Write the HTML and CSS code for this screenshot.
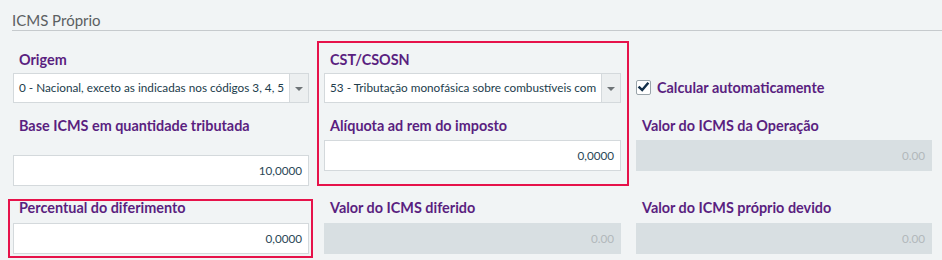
FILE: index.html
```html
<!DOCTYPE html>
<html lang="pt-BR">
<head>
<meta charset="utf-8">
<title>ICMS Próprio</title>
<link rel="stylesheet" href="styles.css">
</head>
<body>
<section class="panel">
  <h2 class="panel-title">ICMS Próprio</h2>
  <div class="grid">
    <div class="field row1 col1">
      <label class="label">Origem</label>
      <div class="select">
        <span class="select-text">0 - Nacional, exceto as indicadas nos códigos 3, 4, 5 e 8</span>
        <span class="select-btn"><span class="caret"></span></span>
      </div>
    </div>
    <div class="field row1 col2">
      <label class="label">CST/CSOSN</label>
      <div class="select">
        <span class="select-text">53 - Tributação monofásica sobre combustíveis com recolhimento diferido</span>
        <span class="select-btn"><span class="caret"></span></span>
      </div>
    </div>
    <div class="field row1 col3">
      <div class="label-spacer"></div>
      <div class="check-row">
        <span class="checkbox">
          <svg viewBox="0 0 14 14" width="14" height="14"><path d="M2.6 7.4 L5.6 10.3 L11.4 3.4" fill="none" stroke="#14304a" stroke-width="2.6" stroke-linecap="square"/></svg>
        </span>
        <span class="check-label">Calcular automaticamente</span>
      </div>
    </div>

    <div class="field row2 col1">
      <label class="label">Base ICMS em quantidade tributada</label>
      <div class="input input-low">10,0000</div>
    </div>
    <div class="field row2 col2">
      <label class="label">Alíquota ad rem do imposto</label>
      <div class="input">0,0000</div>
    </div>
    <div class="field row2 col3">
      <label class="label">Valor do ICMS da Operação</label>
      <div class="input disabled">0.00</div>
    </div>

    <div class="field row3 col1">
      <label class="label">Percentual do diferimento</label>
      <div class="input">0,0000</div>
    </div>
    <div class="field row3 col2">
      <label class="label">Valor do ICMS diferido</label>
      <div class="input disabled">0.00</div>
    </div>
    <div class="field row3 col3">
      <label class="label">Valor do ICMS próprio devido</label>
      <div class="input disabled">0.00</div>
    </div>

    <div class="highlight highlight-cst"></div>
    <div class="highlight highlight-perc"></div>
  </div>
</section>
</body>
</html>
```
FILE: styles.css
```css
* { box-sizing: border-box; }
html, body {
  margin: 0;
  padding: 0;
  background: #f1f4f5;
  font-family: Lato, "Open Sans", "Liberation Sans", sans-serif;
}
.panel {
  width: 942px;
  height: 260px;
  overflow: hidden;
  padding: 10px 0 0 12px;
}
.panel-title {
  margin: 0;
  font-size: 15px;
  font-weight: 400;
  line-height: 20px;
  color: #5b5f62;
  border-bottom: 1px solid #c6cacd;
  padding-left: 0;
}
.grid {
  display: grid;
  grid-template-columns: 296px 297px 296px;
  column-gap: 15px;
  padding: 19px 0 0 1px;
  row-gap: 12px;
}
.row1 { grid-row: 1; }
.row2 { grid-row: 2; }
.row3 { grid-row: 3; }
.col1 { grid-column: 1; }
.col2 { grid-column: 2; }
.col3 { grid-column: 3; }
.field { display: flex; flex-direction: column; min-width: 0; }
.label {
  display: block;
  font-size: 14.4px;
  font-weight: 700;
  line-height: 20px;
  color: #5a1f80;
  padding-left: 6px;
  white-space: nowrap;
}
.row1 .label, .label-spacer { margin-bottom: 3px; }
.label-spacer { height: 20px; }
.row2 .label { margin-bottom: 4px; }
.row3 .label { margin-bottom: 5px; }
.row1 { margin-bottom: 1px; }

.select {
  height: 30px;
  background: #fff;
  border: 1px solid #d4d9dc;
  display: flex;
  align-items: stretch;
}
.select-text {
  flex: 1;
  min-width: 0;
  overflow: hidden;
  white-space: nowrap;
  font-size: 11.75px;
  line-height: 28px;
  padding-left: 5px;
  margin-right: 3px;
  color: #213c4b;
}
.select-btn {
  width: 19px;
  flex: none;
  background: #eceff0;
  border-left: 1px solid #d4d9dc;
  display: flex;
  align-items: center;
  justify-content: center;
}
.caret {
  width: 0;
  height: 0;
  border-left: 4.5px solid transparent;
  border-right: 4.5px solid transparent;
  border-top: 4.5px solid #6e7477;
  margin-top: 1px;
}

.check-row {
  height: 30px;
  display: flex;
  align-items: center;
  gap: 6px;
}
.checkbox {
  width: 15px;
  height: 15px;
  background: #fff;
  border: 1px solid #9aa4aa;
  border-radius: 2px;
  display: flex;
  align-items: center;
  justify-content: center;
  margin-top: -2px;
}
.checkbox svg { display: block; }
.check-label {
  font-size: 14.4px;
  font-weight: 700;
  color: #5a1f80;
  line-height: 20px;
  margin-top: -1px;
}

.input {
  height: 31px;
  background: #fff;
  border: 1px solid #d4d9dc;
  font-size: 11.7px;
  line-height: 29px;
  text-align: right;
  padding-right: 6px;
  color: #2b4756;
}
.input-low { margin-top: 15px; }
.input.disabled {
  background: #d8dfe2;
  border-color: #d8dfe2;
  color: #b2b8bb;
}

.highlight {
  border: 2px solid #e6124a;
  pointer-events: none;
}
.highlight-cst {
  grid-column: 2;
  grid-row: 1 / span 2;
  margin: -9px -8px 0 -7px;
}
.highlight-perc {
  grid-column: 1;
  grid-row: 3;
  margin: 1px -4px -4px -5px;
}
```
